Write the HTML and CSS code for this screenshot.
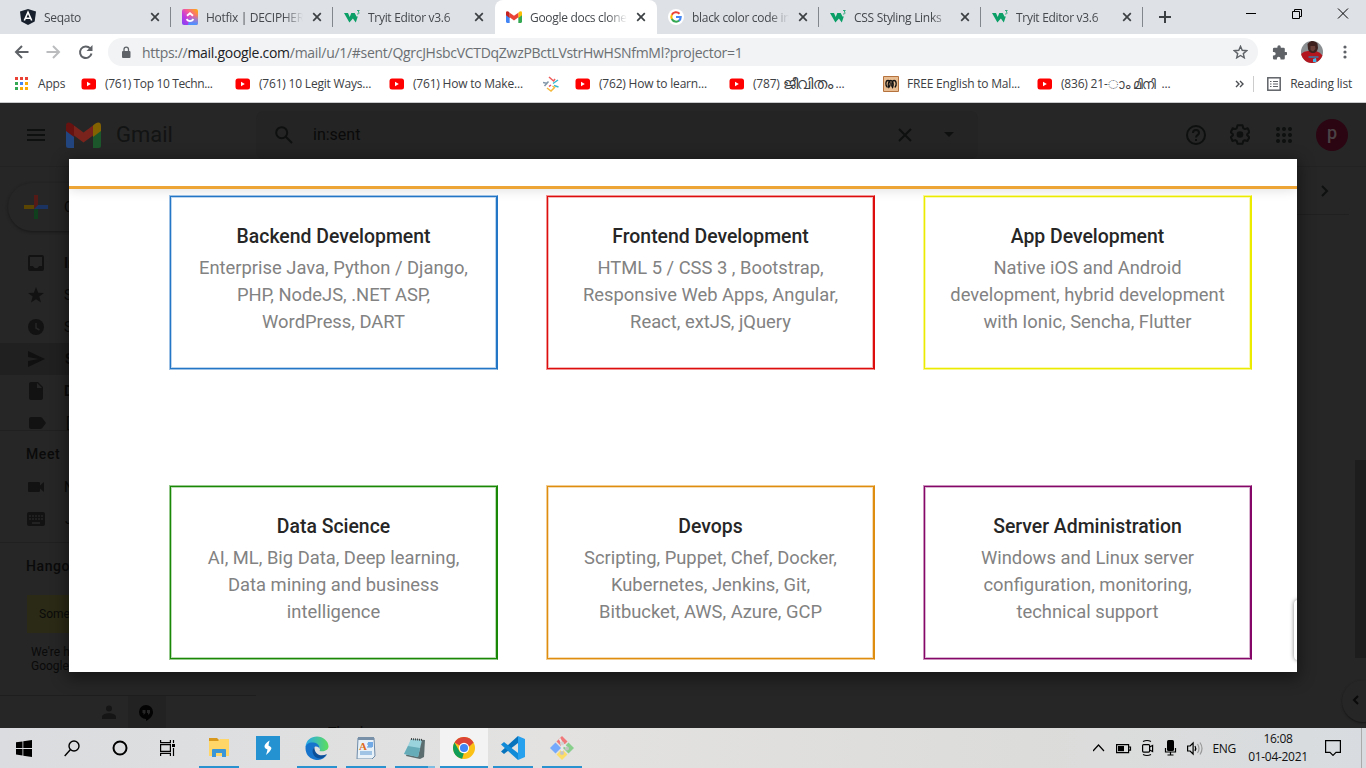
FILE: index.html
```html
<!DOCTYPE html>
<html lang="en">
<head>
<meta charset="utf-8">
<title>Google docs clone</title>
<link rel="stylesheet" href="styles.css">
</head>
<body>
<svg class="defs" width="0" height="0">
  <symbol id="x" viewBox="0 0 10 10"><path d="M1.2 1.2l7.6 7.6M8.8 1.2L1.2 8.8" stroke="#3c4043" stroke-width="1.7" fill="none"/></symbol>
  <symbol id="w3" viewBox="0 0 16 16"><path d="M0 4h4l1.700 4L7.300 4h3.400l1.800 3.500h1.300L11.800 13.500 8.900 9.500 5.400 13.500z" fill="#0a9f66"/><path d="M13 1.500h2.300l-1.200 1.500c1.500.2 1.500 2.300-1.100 2" stroke="#0a9f66" stroke-width=".8" fill="none"/></symbol>
  <symbol id="yt" viewBox="0 0 16 12"><rect x=".5" y=".5" width="14.500" height="11" rx="2.500" fill="#f00"/><path d="M6 3.800v4.400l3.800-2.200z" fill="#fff"/></symbol>
  <symbol id="gm" viewBox="0 0 35 26"><path d="M0 7l8 6v13H2.500A2.500 2.500 0 0 1 0 23.500z" fill="#4285f4"/><path d="M27 13l8-6v16.500a2.500 2.500 0 0 1-2.500 2.500H27z" fill="#34a853"/><path d="M27 3.500C31-.5 35-.5 35 4v5l-8 6z" fill="#fbbc04"/><path d="M8 3.500l9.500 7 9.500-7V13.500l-9.500 7-9.500-7z" fill="#ea4335"/><path d="M0 4C0-.5 4-.5 8 3.500V15L0 9z" fill="#c5221f"/></symbol>
</svg>
<div class="window">
  <header class="tabs">
    <div class="tab first"><svg width="16" height="16" viewBox="0 0 16 16"><path d="M8 0l8 2.600-1.300 10L8 16l-6.700-3.400L0 2.600z" fill="#17202c"/><path d="M4.300 11.500L8 3.200l3.700 8.300M5.600 9.300h4.800" fill="none" stroke="#fff" stroke-width="1.600"/></svg><span class="t">Seqato</span><svg class="close"><use href="#x"/></svg></div>
    <div class="tab"><svg width="16" height="16" viewBox="0 0 16 16"><defs><linearGradient id="cu" x1="0" y1="1" x2="1" y2="0"><stop offset="0" stop-color="#7b45f5"/><stop offset=".35" stop-color="#c23ae0"/><stop offset=".6" stop-color="#f55a9a"/><stop offset="1" stop-color="#ffb400"/></linearGradient><linearGradient id="cv" y2="1" x2="0"><stop stop-color="#49a8ff" stop-opacity="0"/><stop offset="1" stop-color="#4598ff"/></linearGradient></defs><rect width="16" height="16" rx="2" fill="url(#cu)"/><path d="M8 6h8v8a2 2 0 0 1-2 2H6z" fill="url(#cv)"/><path d="M5 6.800l3-2.500 3 2.500M4.500 10.200c2 2.500 5 2.500 7 0" fill="none" stroke="#fff" stroke-width="1.900"/></svg><span class="t">Hotfix | DECIPHER</span><svg class="close"><use href="#x"/></svg></div>
    <div class="tab nosep"><svg width="16" height="16"><use href="#w3"/></svg><span class="t">Tryit Editor v3.6</span><svg class="close"><use href="#x"/></svg></div>
    <div class="tab active"><svg width="16" height="12"><use href="#gm"/></svg><span class="t">Google docs clone</span><svg class="close"><use href="#x"/></svg></div>
    <div class="tab"><svg width="16" height="16" viewBox="0 0 16 16"><circle cx="8" cy="8" r="8" fill="#fff"/><g fill="none" stroke-width="2.100"><path d="M3.800 5.700A4.800 4.800 0 0 1 11.500 4.700" stroke="#ea4335"/><path d="M3.900 10.300a4.800 4.800 0 0 1 0-4.600" stroke="#fbbc04"/><path d="M11.200 11.500a4.800 4.800 0 0 1-7.400-1.400" stroke="#34a853"/><path d="M8 8h4.700q0 2.300-1.700 3.700" stroke="#4285f4"/></g></svg><span class="t">black color code in</span><svg class="close"><use href="#x"/></svg></div>
    <div class="tab"><svg width="16" height="16"><use href="#w3"/></svg><span class="t">CSS Styling Links</span><svg class="close"><use href="#x"/></svg></div>
    <div class="tab"><svg width="16" height="16"><use href="#w3"/></svg><span class="t">Tryit Editor v3.6</span><svg class="close"><use href="#x"/></svg></div>
    <svg class="plus" width="12" height="12"><path d="M6 0v12M0 6h12" stroke="#3c4043" stroke-width="2"/></svg>
    <svg class="winbtns" width="104" height="12" viewBox="0 0 104 12" fill="none" stroke="#000"><path d="M0 5.500h10M46.500 3.500h7v7h-7zM48.500 3.500v-2h7v7h-2M92 .5l10 10M102 .5l-10 10"/></svg>
  </header>
  <div class="toolbar">
    <svg width="86" height="16" viewBox="0 0 86 16" fill="none" stroke-width="2"><path d="M14.500 8H2M8 2L2 8l6 6" stroke="#5f6368"/><path d="M32.500 8H45M39 2l6 6-6 6" stroke="#babcbe"/><path d="M76.200 4.400A5.800 5.800 0 1 0 77.500 9.500" stroke="#5f6368"/><path d="M78.500 1v6h-6z" fill="#5f6368"/></svg>
    <div class="omni"><svg width="10" height="13" viewBox="0 0 10 13"><rect x="1" y="5" width="8.500" height="7" rx="1" fill="#5f6368"/><path d="M3 5.500V3.300a2.200 2.200 0 0 1 4.500 0v2.200" stroke="#5f6368" stroke-width="1.300" fill="none"/></svg><span class="url">https://<b>mail.google.com</b>/mail/u/1/#sent/QgrcJHsbcVCTDqZwzPBctLVstrHwHSNfmMl?projector=1</span>
    <svg class="star" width="15" height="14" viewBox="0 0 15 14"><path d="M7.500 1.300l1.700 4 4.400.4-3.300 2.900 1 4.200-3.800-2.300-3.800 2.300 1-4.200-3.300-2.900 4.400-.4z" fill="none" stroke="#5f6368" stroke-width="1.400"/></svg></div>
    <svg class="puzzle" width="15" height="15" viewBox="0 0 24 24"><path fill="#5f6368" d="M22 11h-1.500V6.500a2 2 0 0 0-2-2H14V3a2.700 2.700 0 0 0-5.400 0v1.500H3.500a2 2 0 0 0-2 2V11H3a2.900 2.900 0 0 1 0 5.800H1.500V21a2 2 0 0 0 2 2h4.300v-1.500a2.900 2.900 0 0 1 5.800 0V23h4.900a2 2 0 0 0 2-2v-4.600H22a2.700 2.700 0 0 0 0-5.400z"/></svg>
    <svg width="22" height="22" viewBox="0 0 22 22"><defs><clipPath id="av"><circle cx="11" cy="11" r="11"/></clipPath></defs><g clip-path="url(#av)"><path d="M0 0h22v22H0z" fill="#8b8f92"/><path d="M0 22v-9q3-3 7-3h8q4 1 7 5v7z" fill="#b3161e"/><path d="M6.500 3Q11-3 16.500 2.500L17 7q-1 5-5 5T7 8z" fill="#3d211f"/><path d="M9.500 5h4.500l.5 3-2.500 2.500L9.500 9z" fill="#6a4038"/><path d="M7.500 15h10v2h-10z" fill="#5a5f86"/><path d="M12 18l3-1 .5 4h-3.500z" fill="#43b7e8"/></g></svg>
    <svg class="dots" width="4" height="14" fill="#5f6368"><circle cx="2" cy="2" r="1.600"/><circle cx="2" cy="7" r="1.600"/><circle cx="2" cy="12" r="1.600"/></svg>
  </div>
  <nav class="bookmarks">
    <div class="bm apps"><svg width="13" height="13"><path d="M0 0h3v3H0zM5 0h3v3H5zM10 0h3v3h-3z" fill="#ea4335"/><path d="M0 5h3v3H0zM0 10h3v3H0z" fill="#34a853"/><path d="M5 5h3v3H5z" fill="#4285f4"/><path d="M10 5h3v3h-3zM5 10h3v3H5zM10 10h3v3h-3z" fill="#fbab05"/></svg><span>Apps</span></div>
    <div class="bm"><svg width="16" height="12"><use href="#yt"/></svg><span class="tight">(761) Top 10 Techn...</span></div>
    <div class="bm"><svg width="16" height="12"><use href="#yt"/></svg><span>(761) 10 Legit Ways...</span></div>
    <div class="bm"><svg width="16" height="12"><use href="#yt"/></svg><span>(761) How to Make...</span></div>
    <div class="bm solo"><svg width="16" height="16" viewBox="0 0 16 16" fill="none" stroke-width="1.500"><path d="M0 6.500l4.500 1M1.500 10l4-4.500" stroke="#8095a8"/><path d="M6 1l4.500 4L12 3" stroke="#ef5a5a"/><path d="M10 7.500l5-3.500M11 9.500l4.500 1.500" stroke="#39b8d0"/><path d="M4 12l4 3 3.500-3.500-2-1.500" stroke="#f5b83b"/><path d="M6 10.500L8 9" stroke="#e54b65"/></svg></div>
    <div class="bm"><svg width="16" height="12"><use href="#yt"/></svg><span>(762) How to learn...</span></div>
    <div class="bm"><svg width="16" height="12"><use href="#yt"/></svg><span>(787) <i class="ml w1">ജീവിതം</i>...</span></div>
    <div class="bm"><svg width="16" height="16" viewBox="0 0 16 16"><path d="M.5.5h15v15H.5z" fill="#e8bd91" stroke="#b5723c"/><path d="M4.500 11.500c-2.500-2-2-7 .5-7s3 5 .8 7c-1.300-3-.3-7 2-7s3.200 4 1.800 7c-1.700-2-.8-7 1.500-7s3 5 .7 7" stroke="#111" stroke-width="1.300" fill="none"/></svg><span>FREE English to Mal...</span></div>
    <div class="bm"><svg width="16" height="12"><use href="#yt"/></svg><span>(836) 21-<i class="ml w2">ാം മിനി</i>...</span></div>
    <div class="reading"><svg width="10" height="8" fill="none" stroke="#4a4e52" stroke-width="1.400"><path d="M1 1l3 3-3 3M5 1l3 3-3 3"/></svg><i class="vbar"></i><svg width="14" height="14" fill="none" stroke="#5f6368"><rect x=".8" y=".8" width="12.400" height="12.400" stroke-width="1.500"/><path d="M3 4.500h1.500M3 7h1.500M3 9.500h1.500M6 4.500h5M6 7h5M6 9.500h5" stroke-width="1.200"/></svg><span>Reading list</span></div>
  </nav>

  <main class="gmail">
    <div class="ghead">
      <svg class="burger" width="18" height="12"><path d="M0 1h18M0 6h18M0 11h18" stroke="#0e0f0f" stroke-width="2"/></svg>
      <svg class="logo" width="35" height="26"><use href="#gm"/></svg>
      <span class="brand">Gmail</span>
      <div class="search"><svg width="18" height="18" viewBox="0 0 18 18" fill="none" stroke="#0e0f0f" stroke-width="2"><circle cx="6.700" cy="6.700" r="5.500"/><path d="M11 11l6 6"/></svg><span>in:sent</span><svg class="sx" width="14" height="14"><path d="M1 1l12 12M13 1L1 13" stroke="#0e0f0f" stroke-width="2"/></svg><svg width="10" height="5"><path d="M0 0h10L5 5z" fill="#0e0f0f"/></svg></div>
      <div class="gicons">
        <svg width="20" height="20" viewBox="0 0 20 20" fill="none" stroke="#0e0f0f" stroke-width="2"><circle cx="10" cy="10" r="9"/><path d="M7 8c0-4 6-4 6 0 0 2-3 2.300-3 4.500"/><path d="M10 14v2"/></svg>
        <svg class="gear" width="20" height="21" viewBox="0 0 20 21"><path d="M7.500 1.200h5l.7 2.900 1.700 1 2.700-.9 1.800 4-2.200 2v1l2.200 2-2 3.800-2.700-.8-1.500 1-.7 2.600h-5l-.7-2.700-1.600-1-2.700.9L.8 13.200l2.100-2v-1l-2.100-2 1.900-4 2.600.9 1.500-1z" fill="none" stroke="#0e0f0f" stroke-width="2" stroke-linejoin="round"/><circle cx="10" cy="10.500" r="3.300" fill="#0e0f0f"/></svg>
        <svg width="16" height="16" fill="#0e0f0f"><circle cx="2" cy="2" r="2"/><circle cx="8" cy="2" r="2"/><circle cx="14" cy="2" r="2"/><circle cx="2" cy="8" r="2"/><circle cx="8" cy="8" r="2"/><circle cx="14" cy="8" r="2"/><circle cx="2" cy="14" r="2"/><circle cx="8" cy="14" r="2"/><circle cx="14" cy="14" r="2"/></svg>
        <span class="acct">p</span>
      </div>
    </div>
    <div class="gbody">
      <aside class="side">
        <div class="compose"><svg width="24" height="24"><path d="M10 0h4v14h-4z" fill="#551a15"/><path d="M0 10h10v4H0z" fill="#5a4503"/><path d="M14 10h10v4H10z" fill="#1a3360"/><path d="M10 14h4v10h-4z" fill="#103f1e"/></svg><span>Compose</span></div>
        <div class="row"><svg width="16" height="16"><path d="M2 0h12a2 2 0 0 1 2 2v12a2 2 0 0 1-2 2H2a2 2 0 0 1-2-2V2a2 2 0 0 1 2-2zm0 2v9h3c1 3 5 3 6 0h3V2z" fill="#121212"/></svg><b>Inbox</b></div>
        <div class="row"><svg width="16" height="16" viewBox="0 0 16 16"><path d="M8 0l2.200 5.700 5.800.2-4.700 3.700 1.700 5.900L8 12.200l-5 3.300 1.700-5.900L0 5.900l5.800-.2z" fill="#121212"/></svg><span>Starred</span></div>
        <div class="row"><svg width="16" height="16"><circle cx="8" cy="8" r="8" fill="#121212"/><path d="M8 4v5l3.500 2" stroke="#262626" stroke-width="1.500" fill="none"/></svg><span>Snoozed</span></div>
        <div class="row on"><svg width="17" height="16"><path d="M0 0l17 8L0 16V10l11-2L0 6z" fill="#101010"/></svg><b>Sent</b></div>
        <div class="row"><svg width="16" height="18"><path d="M3 0h7l5 5v11a2 2 0 0 1-2 2H3a2 2 0 0 1-2-2V2a2 2 0 0 1 2-2z" fill="#121212"/><path d="M9 1v5h5z" fill="#262626"/></svg><b>Drafts</b></div>
        <div class="row last"><svg width="18" height="12"><path d="M3 0h9q1.500 0 2.300 1L18 6l-3.700 5q-.8 1-2.300 1H3a2 2 0 0 1-2-2V2a2 2 0 0 1 2-2z" fill="#121212"/></svg><span>[Imap]/Trash</span></div>
        <h3>Meet</h3>
        <div class="row"><svg width="16" height="10"><path d="M1 0h10q1 0 1 1v2.500L16 0v10l-4-3.500V9q0 1-1 1H1Q0 10 0 9V1q0-1 1-1z" fill="#121212"/></svg><span>New meeting</span></div>
        <div class="row kb"><svg width="18" height="14"><rect width="18" height="14" rx="2" fill="#121212"/><path d="M2 4h14M2 7h14" stroke="#262626" stroke-width="1.700" stroke-dasharray="2 1"/><path d="M5 11h8" stroke="#262626" stroke-width="1.700"/></svg><span>Join a meeting</span></div>
        <h3 class="hang">Hangouts</h3>
        <div class="note">Something's not right.</div>
        <p>We're having trouble<br>Google servers.</p>
        <div class="sfoot"><svg width="14" height="14"><circle cx="7" cy="3.500" r="3" fill="#151515"/><path d="M0 14v-2c0-5 14-5 14 0v2z" fill="#151515"/></svg><span><svg width="14" height="17"><path d="M7 0a7 7 0 0 1 7 7c0 4-3 7-7 9v-2a7 7 0 0 1 0-14z" fill="#030303"/><path d="M3.500 5h3v3l-2 2V8h-1zM8 5h3v3L9 10V8H8z" fill="#262626"/></svg></span></div>
      </aside>
      <section class="mail">
        <div class="mbar"><svg width="8" height="12"><path d="M1 1l5 5-5 5" fill="none" stroke="#0e0f0f" stroke-width="2"/></svg></div>
        <p class="thanks">Thankyou</p>
      </section>
    </div>
    <i class="scroll"></i>
    <span class="expand"><svg width="7" height="10"><path d="M6 1L2 5l4 4" fill="none" stroke="#0a0a0a" stroke-width="2"/></svg></span>
    <div class="viewer">
      <div class="bar"></div>
      <div class="cards">
        <article class="card blue"><h2>Backend Development</h2><p>Enterprise Java, Python / Django,<br>PHP, NodeJS, .NET ASP,<br>WordPress, DART</p></article>
        <article class="card red"><h2>Frontend Development</h2><p>HTML 5 / CSS 3 , Bootstrap,<br>Responsive Web Apps, Angular,<br>React, extJS, jQuery</p></article>
        <article class="card yellow"><h2>App Development</h2><p>Native iOS and Android<br>development, hybrid development<br>with Ionic, Sencha, Flutter</p></article>
        <article class="card green"><h2>Data Science</h2><p>AI, ML, Big Data, Deep learning,<br>Data mining and business<br>intelligence</p></article>
        <article class="card orange"><h2>Devops</h2><p>Scripting, Puppet, Chef, Docker,<br>Kubernetes, Jenkins, Git,<br>Bitbucket, AWS, Azure, GCP</p></article>
        <article class="card purple"><h2>Server Administration</h2><p>Windows and Linux server<br>configuration, monitoring,<br>technical support</p></article>
      </div>
      <i class="handle"></i>
    </div>
  </main>

  <footer class="taskbar">
    <div class="tk"><svg width="16" height="17" viewBox="0 0 16 17"><path d="M0 2.300L6.500 1.400V8H0zM7.300 1.300L16 0v8H7.300zM0 8.900h6.500v6.600L0 14.600zM7.300 8.900H16V17l-8.700-1.300z"/></svg></div>
    <div class="tk"><svg width="16" height="17" fill="none" stroke="#000" stroke-width="1.400"><circle cx="10" cy="6" r="5"/><path d="M6.500 9.500L.7 16"/></svg></div>
    <div class="tk"><svg width="16" height="16" fill="none" stroke="#000" stroke-width="2"><circle cx="8" cy="8" r="6.500"/></svg></div>
    <div class="tk"><svg width="16" height="16" fill="none" stroke="#000" stroke-width="1.200"><path d="M.6 0v2.600h9.800V0M.6 4.600h9.800v6.800H.6zM.6 16v-2.600h9.800V16M13.500 0v3M13.500 8v8"/><path d="M12 4h3v3h-3z" fill="#000" stroke="none"/></svg></div>
    <div class="tk app explorer"><svg width="22" height="20" viewBox="0 0 22 20"><path d="M1 0h8l2 2v3H1z" fill="#d8981b"/><path d="M1 3h9l2-2h9v17H1z" fill="#ffd667"/><path d="M4 19v-7q0-1 1-1h12q1 0 1 1v7h-4v-4H8v4z" fill="#3a96d6"/></svg></div>
    <div class="tk wide"><svg width="24" height="24"><path d="M0 0h24v24H0z" fill="#2492d1"/><path d="M13.500 4.500Q8 8 8.500 11q.5 1.500 3 2.500-.5 2.500-1.500 5.500 5-4 5.500-7-.5-1.500-3-2.500 0-2 1-4.500z" fill="#fff"/></svg></div>
    <div class="tk app"><svg width="24" height="24" viewBox="0 0 24 24"><defs><linearGradient id="e1"><stop stop-color="#26a6ee"/><stop offset="1" stop-color="#5ede5b"/></linearGradient></defs><path d="M.5 11C1 4 6 .5 12 .5S23.500 5 23.500 10.500c0 4-5 5.500-9 4.500 1.500-2 0-6.500-5-6.500C5.500 8.500 1.500 10.500.5 11z" fill="url(#e1)"/><path d="M.5 12c0-4 4-6 8-5.500 4 .3 6.500 3.500 6 6.500-1-2.500-3.500-3-5-2-2.500 2.500-1 8 3.500 9.500 3.500 1 6.500 0 9-2-3 5-9 6.500-13 5C4 22 .5 18 .5 12z" fill="#1674cc"/><path d="M9.500 11c-4 3-1.500 11 5 11.500 3 0 6-2 7.500-4.500-7 3.500-13-.5-12.500-7z" fill="#0c4f99"/></svg></div>
    <div class="tk app"><svg width="20" height="22"><path d="M2 1h16l1 18-3 3H1z" fill="#e9f1f8" stroke="#6c8aa8"/><path d="M2 0h16v3H2z" fill="#7890a8"/><text x="3" y="13" class="wp">A</text><path d="M11 7h5M11 10h5M4 15h12M4 17h12" stroke="#5796d0"/><path d="M12 5h5v5h-5z" fill="#70a9e6"/></svg></div>
    <div class="tk app multi"><svg width="22" height="22"><path d="M7 2l14 1-1 17-4 2L2 19z" fill="#5c6d70"/><path d="M7 2l11 1-4 17L0 17z" fill="#9bd3dd"/><path d="M4 9l12 2-2 9L0 17z" fill="#65abb8"/><path d="M7 2l12 1" stroke="#444" stroke-width="2" stroke-dasharray="1 1"/></svg></div>
    <div class="tk app cur"><svg width="22" height="22" viewBox="0 0 24 24"><circle cx="12" cy="12" r="12" fill="#fbc116"/><path d="M12 12L1.600 6A12 12 0 0 1 22.400 6z" fill="#db4437"/><path d="M1.600 6l6 10.500L12 17l-2 6.800A12 12 0 0 1 1.600 6z" fill="#0f9d58"/><path d="M12 6h10.400L16 12z" fill="#db4437"/><circle cx="12" cy="12" r="5.600" fill="#fff"/><circle cx="12" cy="12" r="4.400" fill="#4285f4"/></svg></div>
    <div class="tk app"><svg width="24" height="24" viewBox="0 0 24 24"><path d="M17 0l7 3v18l-7 3z" fill="#27a0ee"/><path d="M17 0v7L3 18l-3-2.500z" fill="#0873bd"/><path d="M17 24v-7L3 6 0 8.500z" fill="#118bd8"/></svg></div>
    <div class="tk app"><svg width="24" height="24" viewBox="0 0 24 24"><path d="M12 0l5.500 5.500L12 11 6.500 5.500z" fill="#f17878"/><path d="M5.500 6.500L11 12l-5.500 5.500L0 12z" fill="#74a9fb"/><path d="M18.500 6.500L24 12l-5.500 5.500L13 12z" fill="#88cf8c"/><path d="M12 13l5.500 5.500L12 24l-5.500-5.500z" fill="#fbdd68"/><path d="M9.500 2.500L12 7v9M12 7l5 5" stroke="#e8e8e8" fill="none" stroke-width="2"/><circle cx="12" cy="17" r="2" fill="#c4c4c4"/><circle cx="17" cy="12.500" r="2" fill="#c4c4c4"/><circle cx="12" cy="7.500" r="2" fill="#d2d2d2"/></svg></div>
    <div class="tray">
      <svg class="trayi" width="110" height="18" viewBox="0 0 110 18" fill="none" stroke="#000" stroke-width="1.200"><path d="M0 12l5.500-6 5.500 6"/><path d="M23.600 5.600h12v8h-12zM36 8h1.500v3.200H36"/><path d="M25 7h6v5.200h-6z" fill="#000" stroke="none"/><rect x="49.600" y="5.600" width="7" height="7.500" rx="1"/><path d="M56.600 8l3-1.500v6l-3-1.500M50 2.500q4-2 8 0M50 15.500q4 2 8 0"/><rect x="74" y="1" width="7" height="11" rx="1.500" fill="#000" stroke="none"/><path d="M72.500 9v4h10V9M77.500 13v3M74.500 16h6"/><path d="M94.600 7h2.500l3-3v11l-3-3h-2.500z"/><path d="M102 7q1.500 2.500 0 5"/><path d="M104.500 5q3 4.500 0 9M107 3.500q4 6 0 12" stroke="#999"/></svg>
      <span class="eng">ENG</span>
      <div class="clock">16:08<br>01-04-2021</div>
      <svg class="notif" width="16" height="16" fill="none" stroke="#000" stroke-width="1.200"><path d="M.6.600h14.800v11.800H11l-3 3-3-3H.6z"/></svg>
      <i class="peek"></i>
    </div>
  </footer>
</div>
</body>
</html>
```
FILE: styles.css
```css
* { box-sizing: border-box; }
body { margin: 0; font-family: "Open Sans", "Noto Sans", sans-serif; }
svg { flex: none; display: block; }
i { font-style: normal; }
.defs { position: absolute; }
.window { width: 1366px; height: 768px; overflow: hidden; display: flex; flex-direction: column; background: #fff; }

.tabs { height: 34px; background: #dee1e6; display: flex; align-items: center; padding-left: 9px; font-size: 12px; color: #45494d; }
.tab { width: 162px; height: 34px; padding: 0 10px 0 11px; display: flex; align-items: center; background: linear-gradient(#80868b, #80868b) right 7px / 1px 20px no-repeat; background-position: right 0 top 7px; }
.tab.nosep { background: none; }
.tab.active { background: #fff; border-radius: 8px 8px 0 0; }
.t { width: 97px; margin: 0 9px 0 8px; overflow: hidden; white-space: nowrap; letter-spacing: -.3px; -webkit-mask-image: linear-gradient(90deg, #000 80%, transparent); mask-image: linear-gradient(90deg, #000 80%, transparent); }
.tab .close { width: 10px; height: 10px; }
.plus { margin-left: 16px; }
.winbtns { margin-left: 75px; margin-bottom: 6px; }

.toolbar { height: 36px; background: #fff; display: flex; align-items: center; padding-left: 14px; }
.omni { width: 1150px; height: 28px; border-radius: 14px; background: #f1f3f4; margin-left: 8px; padding: 0 10px 0 13px; display: flex; align-items: center; }
.url { margin-left: 11px; font-size: 14px; color: #6b6f73; white-space: nowrap; letter-spacing: -.29px; }
.url b { font-weight: 400; color: #202124; }
.star { margin-left: auto; }
.puzzle { margin: 0 14px; }
.dots { margin-left: 20px; }

.bookmarks { height: 33px; border-bottom: 1px solid #c9cacc; display: flex; align-items: center; padding: 0 0 5px 15px; font-size: 12px; color: #3c4043; letter-spacing: -.2px; }
.bm { width: 154px; display: flex; align-items: center; gap: 8px; white-space: nowrap; }
.bm.apps { width: 66px; gap: 10px; }
.bm.solo { width: 32px; }
.tight { letter-spacing: -.36px; }
.ml { display: inline-block; height: 16px; line-height: 16px; vertical-align: bottom; }
.w1 { width: 53px; font-size: 14.500px; }
.w2 { width: 54px; font-size: 13px; }
.reading { margin-left: auto; padding-right: 14px; display: flex; align-items: center; white-space: nowrap; }
.vbar { width: 1px; height: 16px; background: #ccc; margin: 0 13px 0 8px; }
.reading span { margin-left: 9px; }

.gmail { height: 625px; position: relative; overflow: hidden; background: #262626; color: #0a0a0a; font-family: Roboto, sans-serif; }
.ghead { height: 64px; border-bottom: 1px solid #222; display: flex; align-items: center; padding-left: 27px; }
.logo { margin-left: 21px; filter: brightness(.52); }
.brand { width: 141px; margin-left: 15px; font-size: 22px; color: #121313; }
.search { width: 722px; height: 48px; border-radius: 8px; background: #242424; display: flex; align-items: center; padding: 0 24px 0 19px; font-size: 16px; margin-left: -1px; }
.search span { margin-left: 20px; }
.sx { margin-left: auto; margin-right: 32px; }
.gicons { margin-left: auto; margin-right: 18px; display: flex; align-items: center; gap: 24px; }
.gear { margin-right: 2px; }
.acct { width: 32px; height: 32px; border-radius: 50%; background: #2b0512; color: #4a4245; font-size: 18px; font-weight: 500; line-height: 28px; text-align: center; }
.gbody { display: flex; height: 561px; }
.side { width: 256px; font-size: 14px; overflow: hidden; }
.compose { width: 144px; height: 48px; margin: 16px 0 16px 8px; border-radius: 24px; background: #262626; box-shadow: 0 1px 3px #181818; padding-left: 16px; display: flex; align-items: center; gap: 16px; }
.row { height: 32px; display: flex; align-items: center; padding-left: 28px; }
.row svg { margin-right: -18px; }
.row b, .row span { margin-left: 38px; white-space: nowrap; }
.row b { font-weight: 700; }
.row.on { background: #202020; }
.row.last { height: 24px; padding-top: 8px; border-bottom: 1px solid #202020; }
.side h3 { margin: 0; height: 40px; padding: 6px 0 0 26px; font: 500 14px/34px Roboto, sans-serif; letter-spacing: .6px; }
.row.kb { height: 40px; padding: 0 0 8px 27px; border-bottom: 1px solid #202020; }
.side h3.hang { height: 52px; }
.note { margin-left: 27px; height: 38px; background: #2b2a16; padding-left: 12px; font-size: 12px; line-height: 38px; }
.side p { margin: 12px 0 0 31px; font-size: 12px; line-height: 14px; white-space: nowrap; height: 50px; }
.sfoot { height: 33px; border-top: 1px solid #1e1e1e; padding-left: 102px; display: flex; align-items: center; gap: 12px; }
.sfoot span { width: 38px; height: 32px; background: #222; padding: 9px 11px; }
.mail { flex: 1; display: flex; flex-direction: column; justify-content: space-between; }
.mbar { height: 48px; border-bottom: 1px solid #202020; margin-right: 17px; display: flex; align-items: center; justify-content: flex-end; padding-right: 20px; }
.thanks { margin: 0 0 -13px 72px; font: 14px/18px "Liberation Sans", sans-serif; }
.scroll { position: absolute; right: 0; top: 357px; width: 11px; height: 198px; background: #1d1d1d; }
.expand { position: absolute; left: 1342px; top: 577px; width: 42px; height: 42px; border-radius: 50%; background: #262626; box-shadow: 0 1px 2px #161616; padding: 15px 10px; }

.viewer { position: absolute; left: 69px; top: 56px; width: 1228px; height: 513px; background: #fff; overflow: hidden; }
.gmail::before { content: ""; position: absolute; left: 69px; top: 56px; width: 1228px; height: 513px; box-shadow: 0 4px 15px 2px rgba(0, 0, 0, .45); }
.bar { height: 30px; border-bottom: 3px solid #eda535; box-shadow: 0 1px 12px rgba(0, 0, 0, .13); }
.cards { display: grid; grid-template-columns: repeat(3, 329px); gap: 115px 48px; padding: 6px 0 0 100px; }
.card { height: 175px; padding: 25px 0 0; border: 1px solid color-mix(in srgb, var(--c) 45%, white); border-right-color: var(--c); box-shadow: inset 0 0 0 1px var(--c), inset 0 0 0 2px color-mix(in srgb, var(--c) 30%, white); text-align: center; background: #fff; }
.card h2 { margin: 0; color: #262626; font: 500 19.400px/31px Roboto, sans-serif; }
.card p { margin: 2px 0 0; color: #828282; font-size: 18.370px; line-height: 27px; white-space: nowrap; }
.blue { --c: #2276c5; }
.red { --c: #de0d0d; }
.yellow { --c: #ebeb00; }
.green { --c: #188806; }
.orange { --c: #df8d0f; }
.purple { --c: #850868; }
.handle { position: absolute; right: -6px; top: 441px; width: 9px; height: 60px; border-radius: 4px; background: #fff; box-shadow: 0 0 4px rgba(0, 0, 0, .5); }

.taskbar { height: 40px; background: linear-gradient(90deg, #dadcdf, #e3e2e1 40%, #dcdcda 75%, #d8dce0); display: flex; }
.tk { flex: none; width: 48px; display: flex; align-items: center; justify-content: center; }
.tk.wide { width: 49px; }
.tk.app { border-bottom: 2px solid #2a93cf; padding-top: 2px; width: 40px; margin: 0 4.500px; }
.tk.explorer { margin-left: 7px; }
.tk.multi { border-image: linear-gradient(90deg, #2a93cf 80%, #7dbce2 80%) 2; }
.tk.cur { width: 48px; margin: 0 .5px; background: #f3f3f3; }
.wp { font: bold 11px "Liberation Serif", serif; fill: #e06b1f; }
.tray { margin-left: auto; display: flex; align-items: center; font-size: 12px; letter-spacing: -.3px; color: #111; }
.eng { margin-left: 9px; }
.clock { width: 64px; margin-left: 10px; text-align: center; line-height: 18px; }
.notif { margin-left: 15px; margin-right: 20px; }
.peek { width: 5px; height: 40px; border-left: 1px solid #aaa; }
```
